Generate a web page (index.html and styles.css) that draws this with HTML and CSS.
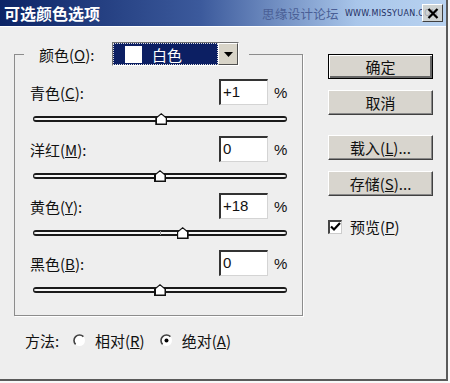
FILE: index.html
```html
<!DOCTYPE html>
<html lang="zh-CN">

<head>
    <meta charset="UTF-8">
    <meta name="viewport" content="width=device-width, initial-scale=1.0">
    <title>可选颜色选项</title>

    <link rel="stylesheet" href="styles.css">
</head>

<body>
    <div class="dialog">
        <!-- Title bar -->
        <div class="titlebar">
            <span class="title">可选颜色选项</span>
            <span class="watermark">思缘设计论坛</span>
            <span class="watermark-url">WWW.MISSYUAN.COM</span>
            <span class="close-btn">
                <svg width="12" height="11" viewBox="0 0 12 11">
                    <path d="M1.5 1 L10.5 10 M10.5 1 L1.5 10" stroke="#000" stroke-width="2.2" />
                </svg>
            </span>
        </div>

        <div class="content">
            <div class="main">
                <fieldset class="group">
                    <legend class="group-head">
                        <span class="head-label">颜色(<u>O</u>):</span>
                        <div class="color-select">
                            <div class="select-value">
                                <span class="swatch"></span>
                                <span>白色</span>
                            </div>
                            <span class="select-arrow">
                                <svg width="9" height="5" viewBox="0 0 9 5">
                                    <path d="M0 0 H9 L4.5 5 Z" fill="#000" />
                                </svg>
                            </span>
                        </div>
                    </legend>

                    <div class="channel">
                        <div class="channel-top">
                            <span class="channel-label">青色(<u>C</u>):</span>
                            <span class="channel-input">+1</span>
                            <span class="pct">%</span>
                        </div>
                        <div class="slider"><span class="thumb" style="left: 50.5%"></span></div>
                    </div>

                    <div class="channel">
                        <div class="channel-top">
                            <span class="channel-label">洋红(<u>M</u>):</span>
                            <span class="channel-input">0</span>
                            <span class="pct">%</span>
                        </div>
                        <div class="slider"><span class="thumb" style="left: 50%"></span></div>
                    </div>

                    <div class="channel">
                        <div class="channel-top">
                            <span class="channel-label">黄色(<u>Y</u>):</span>
                            <span class="channel-input">+18</span>
                            <span class="pct">%</span>
                        </div>
                        <div class="slider"><span class="mark"></span><span class="thumb" style="left: 59%"></span></div>
                    </div>

                    <div class="channel">
                        <div class="channel-top">
                            <span class="channel-label">黑色(<u>B</u>):</span>
                            <span class="channel-input">0</span>
                            <span class="pct">%</span>
                        </div>
                        <div class="slider"><span class="thumb" style="left: 50%"></span></div>
                    </div>
                </fieldset>

                <div class="method">
                    <span class="method-label">方法:</span>
                    <span class="radio">
                        <svg width="13" height="13" viewBox="0 0 13 13">
                            <circle cx="6.5" cy="6.5" r="5.5" fill="#fff" />
                            <path d="M10.4 2.6 A5.5 5.5 0 0 0 2.6 10.4" fill="none" stroke="#404040" stroke-width="1.6" />
                        </svg>
                    </span>
                    <span class="radio-text">相对(<u>R</u>)</span>
                    <span class="radio">
                        <svg width="13" height="13" viewBox="0 0 13 13">
                            <circle cx="6.5" cy="6.5" r="5.5" fill="#fff" />
                            <path d="M10.4 2.6 A5.5 5.5 0 0 0 2.6 10.4" fill="none" stroke="#404040" stroke-width="1.6" />
                            <circle cx="6.5" cy="6.5" r="2" fill="#000" />
                        </svg>
                    </span>
                    <span class="radio-text">绝对(<u>A</u>)</span>
                </div>
            </div>

            <div class="actions">
                <button class="btn btn-default">确定</button>
                <button class="btn">取消</button>
                <button class="btn btn-spaced">载入(<u>L</u>)...</button>
                <button class="btn">存储(<u>S</u>)...</button>
                <div class="preview">
                    <span class="checkbox">
                        <svg width="11" height="10" viewBox="0 0 11 10">
                            <path d="M1 4.5 L4 7.5 L10 1" fill="none" stroke="#000" stroke-width="2.2" />
                        </svg>
                    </span>
                    <span>预览(<u>P</u>)</span>
                </div>
            </div>
        </div>
    </div>
</body>

</html>
```

FILE: styles.css
```css
/* Reset */
* {
    margin: 0;
    padding: 0;
    box-sizing: border-box;
}

body {
    background: #f8f8f8;
    font-family: 'Noto Sans CJK SC', 'Noto Sans', sans-serif;
    font-size: 15px;
    color: #111;
}

u {
    text-decoration: underline;
    text-underline-offset: 1px;
}

/* Window frame */
.dialog {
    width: 448px;
    height: 381px;
    background: #eeeeee;
    border-right: 2px solid #5a5a5a;
    border-bottom: 2px solid #5a5a5a;
}

/* Title bar */
.titlebar {
    height: 27px;
    display: flex;
    align-items: center;
    padding: 0 3px 0 4px;
    background: linear-gradient(90deg, #0c2466 0%, #3c5a9c 45%, #a9c6ea 80%, #b8d2f0 100%);
    border-bottom: 1px solid #fff;
}

.title {
    color: #fff;
    font-weight: 700;
    font-size: 16px;
}

.watermark {
    margin-left: auto;
    font-size: 12.5px;
    color: #4a5f96;
    letter-spacing: 0.3px;
}

.watermark-url {
    margin: 0 -16px 0 6px;
    font-family: 'DejaVu Sans', sans-serif;
    font-size: 8px;
    color: #1e2e62;
    letter-spacing: 0.3px;
}

.close-btn {
    position: relative;
    width: 21px;
    height: 18px;
    display: flex;
    align-items: center;
    justify-content: center;
    background: rgba(216, 212, 200, 0.7);
    border: 1px solid;
    border-color: #fff #404040 #404040 #fff;
}

/* Content */
.content {
    display: flex;
    padding: 15px 0 0 14px;
}

.main {
    width: 289px;
}

/* Group box */
.group {
    border: 1px solid #8c8c8c;
    box-shadow: 1px 1px 0 #fff;
    padding: 13px 14px 7px 15px;
}

.group-head {
    display: flex;
    align-items: center;
    margin-left: -6px;
    padding: 0 10px 0 15px;
}

.head-label {
    width: 73px;
}

.color-select {
    display: flex;
    width: 127px;
    height: 24px;
    border: 1px solid;
    border-color: #707070 #fff #fff #707070;
    background: #d8d4c8;
}

.select-value {
    flex: 1;
    display: flex;
    align-items: center;
    gap: 10px;
    padding-left: 11px;
    background: #0c1f63;
    color: #fff;
    border: 1px dotted #e0e0e0;
}

.swatch {
    width: 17px;
    height: 17px;
    background: #fff;
}

.select-arrow {
    width: 20px;
    display: flex;
    align-items: center;
    justify-content: center;
    border: 1px solid;
    border-color: #fff #505050 #505050 #fff;
}

/* Channel rows */
.channel-top {
    display: flex;
    align-items: center;
    height: 26px;
}

.channel-label {
    flex: 1;
}

.channel-input {
    width: 49px;
    height: 26px;
    padding: 1px 0 0 2px;
    background: #fff;
    border-top: 2px solid #333;
    border-left: 2px solid #333;
    border-right: 1px solid #d4d4d4;
    border-bottom: 1px solid #d4d4d4;
    font-family: 'Liberation Sans', sans-serif;
    font-size: 15px;
    line-height: 20px;
}

.pct {
    width: 14px;
    margin-left: 6px;
    font-family: 'Liberation Sans', sans-serif;
    font-size: 15px;
}

.slider {
    position: relative;
    height: 6px;
    margin: 11px 1px 14px 3px;
    background: #f6f6f6;
    border: 1px solid #1a1a1a;
    border-width: 2px 1px;
    border-radius: 3px;
}

.channel:last-child .slider {
    margin-bottom: 15px;
}

.slider .mark {
    position: absolute;
    left: 50%;
    top: -1px;
    width: 1px;
    height: 4px;
    background: #999;
}

.slider .thumb {
    position: absolute;
    top: -5px;
    width: 12px;
    height: 12px;
    transform: translateX(-50%);
    background: #111;
    clip-path: polygon(50% 0, 100% 42%, 100% 100%, 0 100%, 0 42%);
}

.slider .thumb::after {
    content: "";
    position: absolute;
    inset: 1.5px;
    background: #fff;
    clip-path: polygon(50% 0, 100% 42%, 100% 100%, 0 100%, 0 42%);
}

/* Method row */
.method {
    display: flex;
    align-items: center;
    height: 20px;
    margin-top: 14px;
    padding-left: 11px;
}

.method-label {
    width: 48px;
}

.radio {
    display: flex;
    width: 13px;
    margin-right: 9px;
}

.radio-text {
    margin-right: 15px;
}

/* Buttons */
.actions {
    display: flex;
    flex-direction: column;
    margin-left: 25px;
    padding-top: 12px;
}

.btn {
    width: 105px;
    height: 25px;
    margin-bottom: 11px;
    font-family: 'Noto Sans CJK SC', 'Noto Sans', sans-serif;
    font-size: 15px;
    color: #111;
    background: #d8d5ce;
    border: 1px solid;
    border-color: #fff #404040 #404040 #fff;
    box-shadow: inset -1px -1px 0 #888;
}

.btn-default {
    border: 1px solid #000;
    box-shadow: inset 1px 1px 0 #fff, inset -2px -2px 0 #666;
}

.btn-spaced {
    margin-top: 9px;
}

.preview {
    display: flex;
    align-items: center;
    gap: 8px;
    margin-top: 9px;
}

.checkbox {
    width: 14px;
    height: 14px;
    display: flex;
    align-items: center;
    justify-content: center;
    background: #fff;
    border-top: 2px solid #444;
    border-left: 2px solid #444;
    border-right: 1px solid #ccc;
    border-bottom: 1px solid #ccc;
}
```
